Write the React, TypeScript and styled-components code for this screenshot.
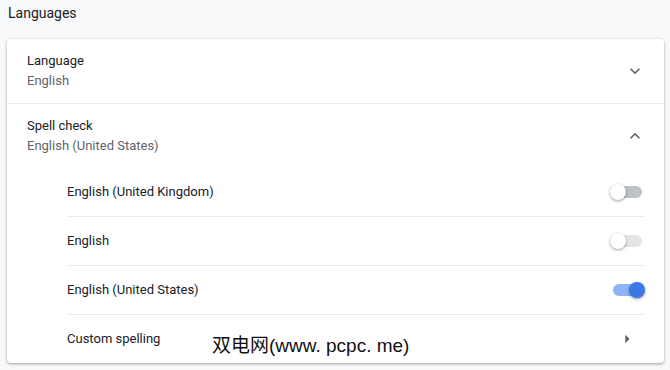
import styled, { createGlobalStyle } from "styled-components";

const GlobalStyle = createGlobalStyle`
    body {
        margin: 0;
        background-color: #f8f9fa;
        font-family: Roboto, "Liberation Sans", Arial, sans-serif;
    }
`;

const StyledPage = styled.div`
    position: relative;
    padding: 0 6px 8px 7px;
`;

const StyledTitle = styled.h2`
    margin: 0;
    padding: 0 0 13px 1px;
    font-size: 14px;
    font-weight: 400;
    line-height: 26px;
    color: #202124;
`;

const StyledCard = styled.section`
    background-color: #fff;
    border-radius: 4px;
    box-shadow: 0 1px 2px 0 rgba(60, 64, 67, 0.3), 0 1px 3px 1px rgba(60, 64, 67, 0.15);
`;

const StyledHeaderRow = styled.div<{ $divided?: boolean }>`
    display: flex;
    align-items: center;
    height: 64px;
    padding: 0 19px 0 20px;
    border-top: ${(p) => (p.$divided ? "1px solid #e8eaed" : "none")};
`;

const StyledTextBlock = styled.div`
    flex: 1;
    display: flex;
    flex-direction: column;
`;

const StyledLabel = styled.div`
    font-size: 13px;
    line-height: 20px;
    color: #202124;
`;

const StyledSecondary = styled.div`
    font-size: 13px;
    line-height: 20px;
    color: #5f6368;
`;

const StyledSubList = styled.div`
    padding: 0 20px 0 60px;
`;

const StyledSubRow = styled.div<{ $divided?: boolean }>`
    display: flex;
    align-items: center;
    justify-content: space-between;
    height: 48px;
    border-top: ${(p) => (p.$divided ? "1px solid #e8eaed" : "none")};
`;

const StyledToggle = styled.div`
    position: relative;
    width: 29px;
    height: 16px;
    margin-right: 2px;
`;

const StyledTrack = styled.div<{ $checked?: boolean; $disabled?: boolean }>`
    position: absolute;
    left: 0;
    right: 0;
    top: 2px;
    height: 12px;
    border-radius: 6px;
    background-color: ${(p) => (p.$checked ? "#8fb4f5" : p.$disabled ? "#e4e5e7" : "#bdc1c6")};
`;

const StyledKnob = styled.div<{ $checked?: boolean }>`
    position: absolute;
    top: 0;
    ${(p) => (p.$checked ? "right: -3px;" : "left: -3px;")}
    width: 16px;
    height: 16px;
    border-radius: 50%;
    background-color: ${(p) => (p.$checked ? "#3b78e7" : "#fff")};
    box-shadow: 0 1px 3px 0 rgba(0, 0, 0, 0.4);
`;

const StyledIcon = styled.svg<{ $gap?: number }>`
    display: block;
    flex: none;
    fill: #5f6368;
    margin-right: ${(p) => p.$gap ?? 0}px;
`;

const StyledWatermark = styled.div`
    position: absolute;
    left: 212px;
    top: 333px;
    font-family: "Liberation Sans", "Noto Sans CJK SC", sans-serif;
    font-size: 19px;
    line-height: 26px;
    color: #111;
    white-space: nowrap;
    text-shadow: 0 0 2px #fff, 0 0 2px #fff, 1px 1px 1px #fff;
`;

function Chevron({ up }: { up?: boolean }) {
    return (
        <StyledIcon width="20" height="20" viewBox="0 0 24 24">
            {up ? (
                <path d="M7.41 15.41L12 10.83l4.59 4.58L18 14l-6-6-6 6z" />
            ) : (
                <path d="M16.59 8.59L12 13.17 7.41 8.59 6 10l6 6 6-6z" />
            )}
        </StyledIcon>
    );
}

function Toggle({ checked, disabled }: { checked?: boolean; disabled?: boolean }) {
    return (
        <StyledToggle>
            <StyledTrack $checked={checked} $disabled={disabled} />
            <StyledKnob $checked={checked} />
        </StyledToggle>
    );
}

const dictionaries = [
    { name: "English (United Kingdom)", checked: false, disabled: false },
    { name: "English", checked: false, disabled: true },
    { name: "English (United States)", checked: true, disabled: false },
];

export default function App() {
    return (
        <StyledPage>
            <GlobalStyle />
            <StyledTitle>Languages</StyledTitle>
            <StyledCard>
                <StyledHeaderRow>
                    <StyledTextBlock>
                        <StyledLabel>Language</StyledLabel>
                        <StyledSecondary>English</StyledSecondary>
                    </StyledTextBlock>
                    <Chevron />
                </StyledHeaderRow>
                <StyledHeaderRow $divided>
                    <StyledTextBlock>
                        <StyledLabel>Spell check</StyledLabel>
                        <StyledSecondary>English (United States)</StyledSecondary>
                    </StyledTextBlock>
                    <Chevron up />
                </StyledHeaderRow>
                <StyledSubList>
                    {dictionaries.map((d, i) => (
                        <StyledSubRow key={d.name} $divided={i > 0}>
                            <StyledLabel>{d.name}</StyledLabel>
                            <Toggle checked={d.checked} disabled={d.disabled} />
                        </StyledSubRow>
                    ))}
                    <StyledSubRow $divided>
                        <StyledLabel>Custom spelling</StyledLabel>
                        <StyledIcon width="20" height="20" viewBox="0 0 24 24" $gap={7}>
                            <path d="M10 17l5-5-5-5v10z" />
                        </StyledIcon>
                    </StyledSubRow>
                </StyledSubList>
            </StyledCard>
            <StyledWatermark>双电网(www. pcpc. me)</StyledWatermark>
        </StyledPage>
    );
}
